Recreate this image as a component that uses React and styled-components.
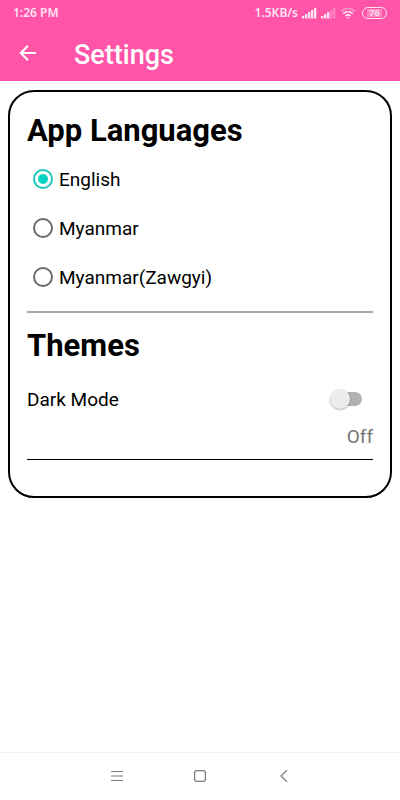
import React, { useState } from 'react'
import styled, { createGlobalStyle } from 'styled-components'

const GlobalStyle = createGlobalStyle`
  * {
    box-sizing: border-box;
  }

  body {
    margin: 0;
    background: #fff;
    color: #000;
    font-family: Roboto, 'Liberation Sans', sans-serif;
  }
`

const Screen = styled.div`
  display: flex;
  flex-direction: column;
  min-height: 100vh;
`

const Header = styled.header`
  background: #ff54a8;
  color: #fff;
`

const StatusBar = styled.div`
  display: flex;
  align-items: center;
  justify-content: space-between;
  height: 25px;
  padding: 0 13px;
  color: #ffe3f3;
  font-family: 'Noto Sans', 'Open Sans', sans-serif;
  font-size: 12px;
  font-weight: 600;
  line-height: 16px;
`

const StatusIcons = styled.div`
  display: flex;
  align-items: center;
  gap: 4px;
`

const Toolbar = styled.div`
  display: flex;
  align-items: center;
  gap: 34px;
  height: 56px;
  padding: 0 16px;
`

const IconButton = styled.button`
  display: flex;
  align-items: center;
  justify-content: center;
  width: 24px;
  height: 24px;
  padding: 0;
  border: 0;
  background: none;
  color: inherit;
  cursor: pointer;
`

const Title = styled.h1`
  margin: 0;
  padding-top: 4px;
  font-size: 27px;
  font-weight: 500;
  line-height: 32px;
`

const Main = styled.main`
  flex: 1;
  padding: 9px 8px;
`

const Card = styled.div`
  padding: 18px 17px 36px;
  border: 2px solid #000;
  border-radius: 26px;
`

const Section = styled.section`
  border-bottom: ${props => (props.$strong ? '1px solid #000' : '2px solid #a6a6a6')};

  & + & {
    padding-top: 12px;
  }
`

const SectionTitle = styled.h2`
  margin: 0;
  padding: 1px 0 3px;
  font-size: 31px;
  font-weight: 700;
  line-height: 40px;
`

const RadioGroup = styled.div`
  display: flex;
  flex-direction: column;
  padding-bottom: 10px;
`

const Option = styled.label`
  display: flex;
  align-items: center;
  gap: 6px;
  height: 49px;
  padding-left: 6px;
  cursor: pointer;
`

const LabelText = styled.span`
  padding-top: 2px;
  font-size: 19px;
  line-height: 24px;
`

const Radio = styled.input`
  appearance: none;
  display: grid;
  place-items: center;
  width: 20px;
  height: 20px;
  margin: 0;
  border: 2px solid #6a6a6a;
  border-radius: 50%;

  &:checked {
    border-color: #1bc9bd;
  }

  &:checked::before {
    content: '';
    width: 10px;
    height: 10px;
    border-radius: 50%;
    background: #03d3c0;
  }
`

const SwitchRow = styled.label`
  display: flex;
  align-items: center;
  justify-content: space-between;
  height: 44px;
  margin-top: 8px;
  padding-right: 11px;
`

const Switch = styled.input`
  appearance: none;
  display: flex;
  align-items: center;
  width: 32px;
  height: 14px;
  margin: 0;
  border-radius: 7px;
  background: #b2b2b2;
  cursor: pointer;

  &::before {
    content: '';
    width: 20px;
    height: 20px;
    border-radius: 50%;
    background: #ececec;
    box-shadow: 0 1px 2px rgba(0, 0, 0, 0.3);
  }

  &:checked {
    justify-content: flex-end;
  }

  &:checked::before {
    background: #03d3c0;
  }
`

const SwitchState = styled.p`
  margin: 0;
  padding: 4px 0 10px;
  color: #757575;
  font-size: 19px;
  line-height: 24px;
  text-align: right;
`

const NavBar = styled.nav`
  display: grid;
  grid-template-columns: repeat(3, 1fr);
  place-items: center;
  height: 48px;
  padding: 0 19% 2px;
  border-top: 1px solid #f3f3f3;
  color: #7b7b7b;
`

const Signal = ({ level }) => (
  <svg width="15" height="12" viewBox="0 0 15 12" fill="currentColor" aria-hidden="true">
    {[0, 1, 2, 3, 4].map(i => (
      <rect
        key={i}
        x={i * 3}
        y={9 - i * 2}
        width="2.3"
        height={i * 2 + 2.5}
        opacity={i < level ? 1 : 0.35}
      />
    ))}
  </svg>
)

const Wifi = () => (
  <svg width="16" height="12" viewBox="0 0 16 12" fill="none" stroke="currentColor" strokeWidth="1.6" aria-hidden="true">
    <path d="M1 4.4C5 .6 11 .6 15 4.4" opacity=".5" />
    <path d="M3.2 6.7C6 4.2 10 4.2 12.8 6.7" />
    <path d="M5.4 8.9C7 7.6 9 7.6 10.6 8.9" />
    <path d="M6.4 10.2h3.2L8 11.8z" fill="currentColor" stroke="none" />
  </svg>
)

const Battery = styled.span`
  display: flex;
  align-items: center;
  justify-content: center;
  width: 25px;
  height: 12px;
  margin-left: 2px;
  border: 1px solid #ffe3f3;
  border-radius: 6px;
  background: linear-gradient(#ff86c0, #ff86c0) center / 15px 8px no-repeat;
  font-size: 9px;
  line-height: 10px;
`

const languages = ['English', 'Myanmar', 'Myanmar(Zawgyi)']

const App = () => {
  const [language, setLanguage] = useState('English')
  const [dark, setDark] = useState(false)

  return (
    <Screen>
      <GlobalStyle />
      <Header>
        <StatusBar>
          <span>1:26 PM</span>
          <StatusIcons>
            <span>1.5KB/s</span>
            <Signal level={5} />
            <Signal level={3} />
            <Wifi />
            <Battery>76</Battery>
          </StatusIcons>
        </StatusBar>
        <Toolbar>
          <IconButton type="button" aria-label="Back">
            <svg width="24" height="24" viewBox="0 0 24 24" fill="none" stroke="currentColor" strokeWidth="2">
              <path d="M20 12H5.5M12 4.7L4.7 12l7.3 7.3" />
            </svg>
          </IconButton>
          <Title>Settings</Title>
        </Toolbar>
      </Header>

      <Main>
        <Card>
          <Section>
            <SectionTitle id="languages">App Languages</SectionTitle>
            <RadioGroup role="radiogroup" aria-labelledby="languages">
              {languages.map(name => (
                <Option key={name}>
                  <Radio
                    type="radio"
                    name="language"
                    value={name}
                    checked={language === name}
                    onChange={() => setLanguage(name)}
                  />
                  <LabelText>{name}</LabelText>
                </Option>
              ))}
            </RadioGroup>
          </Section>

          <Section $strong>
            <SectionTitle>Themes</SectionTitle>
            <SwitchRow>
              <LabelText>Dark Mode</LabelText>
              <Switch
                type="checkbox"
                role="switch"
                checked={dark}
                onChange={e => setDark(e.target.checked)}
              />
            </SwitchRow>
            <SwitchState>{dark ? 'On' : 'Off'}</SwitchState>
          </Section>
        </Card>
      </Main>

      <NavBar>
        <IconButton type="button" aria-label="Recent apps">
          <svg width="12" height="12" viewBox="0 0 12 12" stroke="currentColor">
            <path d="M0 1.5h12M0 6h12M0 10.5h12" />
          </svg>
        </IconButton>
        <IconButton type="button" aria-label="Home">
          <svg width="12" height="12" viewBox="0 0 12 12" fill="none" stroke="currentColor" strokeWidth="1.2">
            <rect x=".6" y=".6" width="10.8" height="10.8" rx="2.4" />
          </svg>
        </IconButton>
        <IconButton type="button" aria-label="Back">
          <svg width="12" height="12" viewBox="0 0 12 12" fill="none" stroke="currentColor" strokeWidth="1.2">
            <path d="M10 .3L4 6l6 5.7" />
          </svg>
        </IconButton>
      </NavBar>
    </Screen>
  )
}

export default App
